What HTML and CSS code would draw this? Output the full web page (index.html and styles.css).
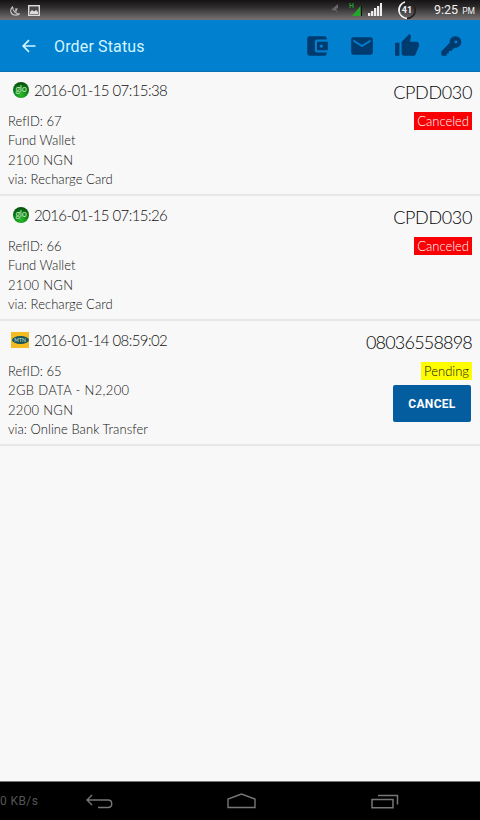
FILE: index.html
```
<!DOCTYPE html>
<html lang="en">
<head>
    <meta charset="UTF-8">
    <meta name="viewport" content="width=device-width, initial-scale=1.0">
    <title>Order Status</title>
    <link rel="stylesheet" href="styles.css">
</head>
<body>
    <div class="statusbar">
        <svg class="moon" width="10" height="10" viewBox="0 0 10 10" fill="none" stroke="#c8c8c8" stroke-width="1.1">
            <path d="M2.5 1C0 3 0 8 4 9C6 9.3 8 9 9.5 8C6 8 3 5 2.5 1Z"/>
            <path d="M5 3h2L5.5 5H7"/>
        </svg>
        <svg class="picture" width="12" height="11" viewBox="0 0 12 11">
            <rect x=".7" y=".7" width="10.6" height="9.6" fill="#4a4848" stroke="#ddd" stroke-width="1.4"/>
            <path d="M2 9V7l2-2 2 1.5L8 5l2 2v2z" fill="#ddd"/>
        </svg>
        <div class="signals">
            <svg class="mute" width="9" height="10" viewBox="0 0 9 10" fill="#696767">
                <path d="M0 6L7 0V4L5 5L7 9L4 6.5z"/>
            </svg>
            <svg class="network" width="13" height="13" viewBox="0 0 13 13">
                <path d="M11.500 3v10H3z" fill="#25a52a"/>
                <path d="M1 0v5M4 0v5M1 2.5h3" stroke="#25a52a" fill="none"/>
                <path d="M12.5 3v10" stroke="#111"/>
            </svg>
            <svg class="bars" width="14" height="13" viewBox="0 0 14 13" fill="#eee">
                <path d="M0 10h2.3v3H0zM3 8h2.3v5H3zM6 5h2.3v8H6zM9 3h2.3v10H9zM12 0h2v13h-2z"/>
            </svg>
            <div class="battery">
                <svg width="20" height="20" viewBox="0 0 20 20" fill="none" stroke-width="1.8">
                    <circle cx="10" cy="10" r="8.3" stroke="#222"/>
                    <path d="M10 18.3A8.3 8.3 0 0 1 8 2" stroke="#f4f4f4"/>
                </svg>
                <span>41</span>
            </div>
            <div class="clock"><span>9:25</span><small>PM</small></div>
        </div>
    </div>

    <header class="toolbar">
        <svg class="back" width="14" height="14" viewBox="0 0 14 14" fill="none" stroke="#d3f5ff" stroke-width="1.7">
            <path d="M13.5 7H1.5M7 1.2L1.2 7L7 12.8"/>
        </svg>
        <h1>Order Status</h1>
        <div class="actions">
            <svg width="26" height="26" viewBox="0 0 24 24">
                <path d="M21 18v1c0 1.1-.9 2-2 2H5c-1.11 0-2-.9-2-2V5c0-1.1.89-2 2-2h14c1.1 0 2 .9 2 2v1h-9c-1.11 0-2 .9-2 2v8c0 1.1.89 2 2 2h9zm-9-2h10V8H12v8zm4-2.5c-.83 0-1.5-.67-1.5-1.5s.67-1.5 1.5-1.5 1.5.67 1.5 1.5-.67 1.5-1.5 1.5z"/>
            </svg>
            <svg width="26" height="26" viewBox="0 0 24 24">
                <path d="M20 4H4c-1.1 0-1.99.9-1.99 2L2 18c0 1.1.9 2 2 2h16c1.1 0 2-.9 2-2V6c0-1.1-.9-2-2-2zm0 4l-8 5-8-5V6l8 5 8-5v2z"/>
            </svg>
            <svg width="26" height="26" viewBox="0 0 24 24">
                <path d="M1 21h4V9H1v12zm22-11c0-1.1-.9-2-2-2h-6.31l.95-4.57.03-.32c0-.41-.17-.79-.44-1.06L14.17 1 7.59 7.59C7.22 7.95 7 8.45 7 9v10c0 1.1.9 2 2 2h9c.83 0 1.54-.5 1.84-1.22l3.02-7.05c.09-.23.14-.47.14-.73v-2z"/>
            </svg>
            <svg class="key" width="26" height="26" viewBox="0 0 24 24">
                <path fill-rule="evenodd" d="M16 3a5.3 5.3 0 1 1-.8 10.500L12 16.500H10V19H8v2H4.500A1.500 1.500 0 0 1 3 19.500V17L10.700 9.300A5.300 5.300 0 0 1 16 3zM16.500 7a1.400 1.400 0 1 0 .01 0z"/>
            </svg>
        </div>
    </header>

    <main class="orders">
        <section class="order">
            <div class="details">
                <div class="date">
                    <span class="glo">glo</span>
                    <time>2016-01-15 07:15:38</time>
                </div>
                <p class="ref">RefID: 67</p>
                <p class="item">Fund Wallet</p>
                <p class="amount">2100 NGN</p>
                <p class="via">via: Recharge Card</p>
            </div>
            <div class="summary">
                <h2 class="code">CPDD030</h2>
                <span class="tag canceled">Canceled</span>
            </div>
        </section>

        <section class="order">
            <div class="details">
                <div class="date">
                    <span class="glo">glo</span>
                    <time>2016-01-15 07:15:26</time>
                </div>
                <p class="ref">RefID: 66</p>
                <p class="item">Fund Wallet</p>
                <p class="amount">2100 NGN</p>
                <p class="via">via: Recharge Card</p>
            </div>
            <div class="summary">
                <h2 class="code">CPDD030</h2>
                <span class="tag canceled">Canceled</span>
            </div>
        </section>

        <section class="order">
            <div class="details">
                <div class="date">
                    <span class="mtn"><b>MTN</b></span>
                    <time>2016-01-14 08:59:02</time>
                </div>
                <p class="ref">RefID: 65</p>
                <p class="item plan">2GB DATA - N2,200</p>
                <p class="amount">2200 NGN</p>
                <p class="via">via: Online Bank Transfer</p>
            </div>
            <div class="summary">
                <h2 class="phone">08036558898</h2>
                <span class="tag pending">Pending</span>
                <button class="cancel">CANCEL</button>
            </div>
        </section>
    </main>

    <footer class="navbar">
        <span class="speed">0 KB/s</span>
        <svg class="nav-back" width="27" height="16" viewBox="0 0 27 16" fill="none" stroke="#777" stroke-width="1.4">
            <path d="M6 2L1 7L6 12M1 7H22C27 7 27 14.500 22 14.500H12"/>
        </svg>
        <svg class="nav-home" width="29" height="16" viewBox="0 0 29 16" fill="none" stroke="#777" stroke-width="1.4">
            <path d="M1 14.5V6L14.5 1L28 6V14.5z"/>
        </svg>
        <svg class="nav-recent" width="28" height="16" viewBox="0 0 28 16" fill="none" stroke="#777" stroke-width="1.5">
            <path d="M1 6.500H22V14.700H1zM7 2.500H26.500V11.500"/>
        </svg>
    </footer>
</body>
</html>
```
FILE: styles.css
```
*{
    box-sizing: border-box;
}
body{
    margin: 0;
    height: 820px;
    display: flex;
    flex-direction: column;
    background: #f8f8f8;
    font-family: Lato, "Open Sans", sans-serif;
    font-weight: 300;
    overflow: hidden;
}
h1, h2, p{
    margin: 0;
    font-weight: inherit;
}
svg{
    display: block;
    flex: none;
}
.statusbar{
    height: 20px;
    display: flex;
    padding: 0 5px 0 10px;
    background: linear-gradient(#151313, #2d2b2b 35%, #777374);
    color: #f2f2f2;
    font-family: Roboto, sans-serif;
}
.moon{
    margin-top: 6px;
}
.picture{
    margin: 5px 0 0 8px;
}
.signals{
    display: flex;
    margin-left: auto;
}
.mute{
    margin: 4px 9px 0 0;
}
.network{
    margin: 3px 6px 0 0;
}
.bars{
    margin: 3px 15px 0 0;
}
.battery{
    display: grid;
    width: 20px;
    height: 20px;
    margin-right: 17px;
}
.battery > *{
    grid-area: 1 / 1;
}
.battery span{
    font-size: 9px;
    font-weight: 700;
    line-height: 20px;
    text-align: center;
}
.clock{
    width: 41px;
    display: flex;
    align-items: baseline;
    justify-content: space-between;
    font-size: 12.5px;
    font-weight: 400;
    line-height: 20px;
}
.clock small{
    font-size: 8.5px;
}
.toolbar{
    height: 52px;
    display: flex;
    align-items: center;
    padding: 0 16px 0 22px;
    background: #0080cf;
    border-bottom: 1px solid #0872b2;
}
.toolbar h1{
    margin: 1px 0 0 18px;
    color: #d3f5ff;
    font-family: Roboto, sans-serif;
    font-size: 16px;
    font-weight: 400;
    letter-spacing: .15px;
}
.actions{
    display: flex;
    gap: 19px;
    margin-left: auto;
    fill: #003b70;
}
.key{
    margin-left: -1px;
}
.orders{
    flex: 1;
    color: #111;
}
.order{
    height: 125px;
    display: flex;
    justify-content: space-between;
    padding: 9px 8px 0;
    border-bottom: 2px solid #e7e7e7;
}
.order:first-child{
    height: 124px;
    padding-top: 8px;
}
.details p{
    height: 19px;
    font-size: 13px;
    line-height: 20px;
    white-space: nowrap;
}
.details .ref, .details .item{
    line-height: 18px;
}
.details .amount{
    letter-spacing: .3px;
}
.details .plan{
    letter-spacing: .35px;
}
.details .via{
    letter-spacing: .05px;
}
.date{
    height: 20px;
    display: flex;
    align-items: center;
    margin-bottom: 12px;
    padding-left: 3px;
}
.date time{
    font-size: 15px;
    letter-spacing: -.58px;
    line-height: 20px;
}
.glo{
    width: 16px;
    height: 16px;
    margin: 0 5px 0 2px;
    border-radius: 50%;
    background: radial-gradient(circle at 50% 80%, #28bd2c, #0c7d13 50%, #03370a);
    color: #c2e5bf;
    font-size: 9px;
    font-weight: 400;
    letter-spacing: -.3px;
    line-height: 14px;
    text-align: center;
}
.mtn{
    width: 18px;
    height: 16px;
    display: grid;
    place-items: center;
    margin-right: 5px;
    background: #f3bc22;
}
.mtn b{
    width: 17px;
    height: 8px;
    border-radius: 50%;
    background: #17545b;
    color: #d8e8d0;
    font-size: 5px;
    line-height: 8px;
    text-align: center;
}
.summary{
    display: flex;
    flex-direction: column;
    align-items: flex-end;
}
.code, .phone{
    height: 24px;
    margin-bottom: 8px;
    color: #000;
    font-size: 18px;
    line-height: 24px;
}
.code{
    letter-spacing: -.35px;
}
.phone{
    letter-spacing: -.8px;
}
.tag{
    height: 18px;
    padding: 0 3px;
    font-size: 13px;
    line-height: 18px;
}
.canceled{
    background: #f90004;
    color: #fff;
}
.pending{
    background: #fdfd00;
}
.cancel{
    width: 78px;
    height: 37px;
    margin: 5px 1px 0 0;
    padding: 0;
    border: 0;
    border-radius: 2px;
    background: #045d9f;
    color: #fff;
    font: 700 12px Roboto, sans-serif;
    letter-spacing: .3px;
}
.navbar{
    height: 39px;
    display: flex;
    align-items: center;
    background: #000;
    border-top: 1px solid #777;
    color: #555;
    font-family: Roboto, sans-serif;
    font-size: 12px;
    font-weight: 400;
}
.speed{
    width: 86px;
    letter-spacing: .4px;
}
.nav-home{
    margin-left: 114px;
}
.nav-recent{
    margin-left: 115px;
}
```
